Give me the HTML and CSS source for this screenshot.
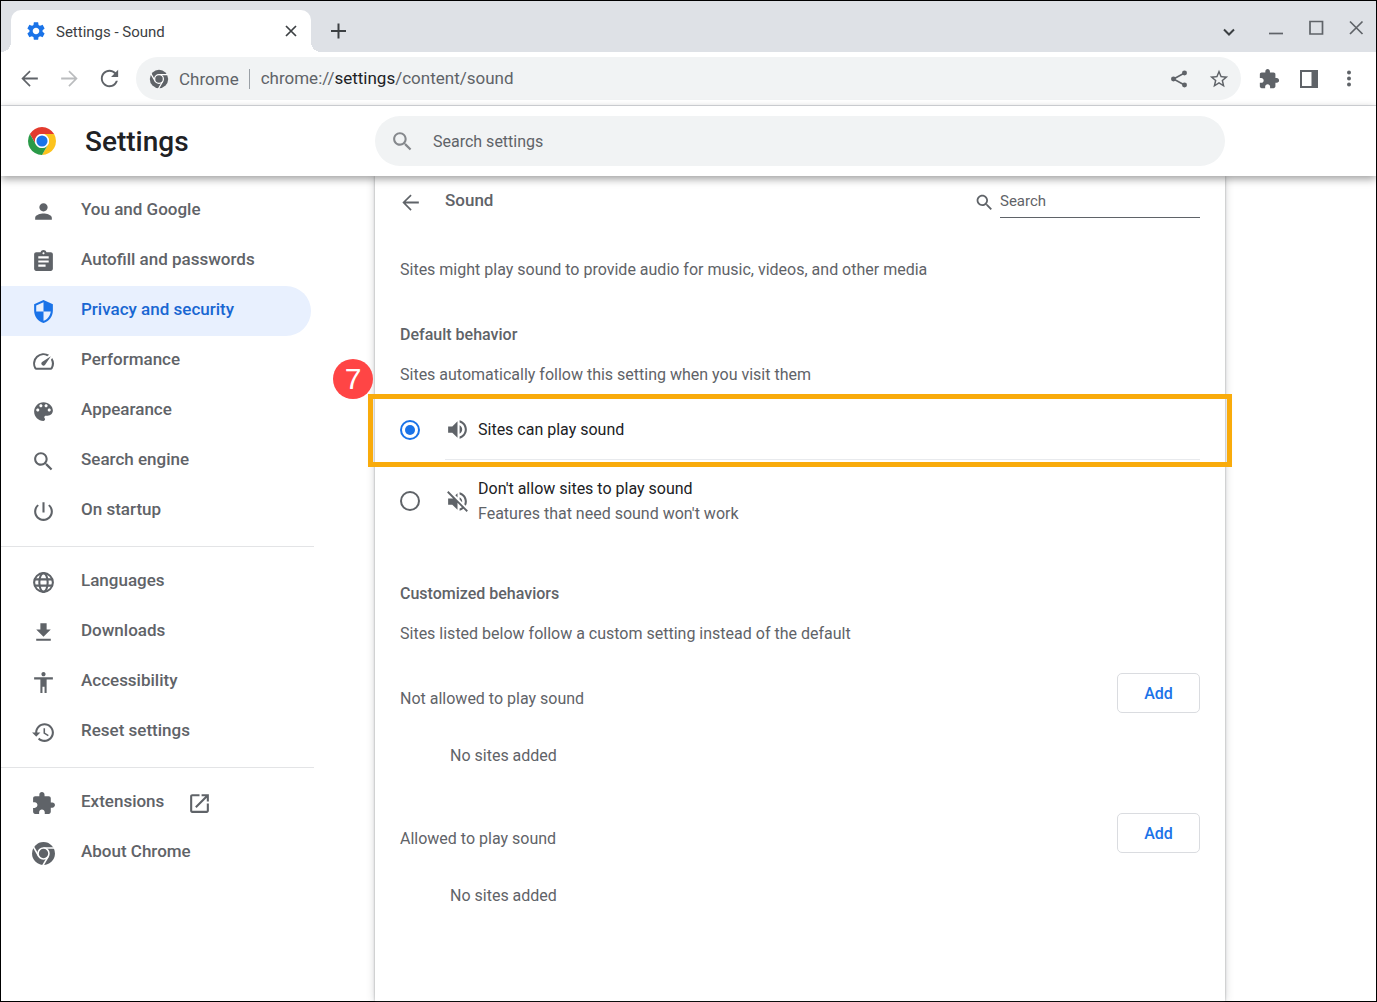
FILE: index.html
```html
<!DOCTYPE html>
<html lang="en">
<head>
<meta charset="utf-8">
<title>Settings - Sound</title>
<link rel="stylesheet" href="styles.css">
</head>
<body>
<svg class="sprite" aria-hidden="true">
  <symbol id="search" viewBox="0 0 24 24"><path d="M15.5 14h-.79l-.28-.27C15.41 12.59 16 11.11 16 9.5 16 5.91 13.09 3 9.5 3S3 5.91 3 9.5 5.91 16 9.5 16c1.61 0 3.09-.59 4.23-1.57l.27.28v.79l5 4.99L20.49 19l-4.99-5zm-6 0C7.01 14 5 11.99 5 9.5S7.01 5 9.5 5 14 7.01 14 9.5 11.99 14 9.5 14z"/></symbol>
  <symbol id="arrow-back" viewBox="0 0 24 24"><path d="M20 11.1H7.4l5.7-5.7L12 4.200 4.200 12l7.800 7.800 1.100-1.200-5.700-5.700H20z"/></symbol>
  <symbol id="arrow-forward" viewBox="0 0 24 24"><path d="M4 11.100h12.600l-5.700-5.700L12 4.200l7.800 7.800-7.800 7.800-1.100-1.200 5.700-5.700H4z"/></symbol>
  <symbol id="extension" viewBox="0 0 24 24"><path d="M20.5 11H19V7c0-1.1-.9-2-2-2h-4V3.5C13 2.12 11.88 1 10.5 1S8 2.12 8 3.5V5H4c-1.1 0-1.99.9-1.99 2v3.8H3.5c1.49 0 2.7 1.21 2.7 2.7s-1.21 2.7-2.7 2.7H2V20c0 1.1.9 2 2 2h3.8v-1.5c0-1.49 1.21-2.7 2.7-2.7 1.49 0 2.7 1.21 2.7 2.7V22H17c1.1 0 2-.9 2-2v-4h1.5c1.38 0 2.5-1.12 2.5-2.5S21.88 11 20.5 11z"/></symbol>
  <symbol id="chrome-mono" viewBox="0 0 48 48">
    <circle cx="24" cy="24" r="22"/>
    <path class="cut" d="M24 13.5H45M33.1 29.3 22.6 47.4M14.9 29.3 4.4 11"/>
    <circle class="cut" cx="24" cy="24" r="10.5"/>
  </symbol>
</svg>

<div class="window">
  <header class="tab-strip">
    <div class="tab">
      <svg class="icon favicon" viewBox="0 0 24 24"><path d="M19.14 12.94c.04-.3.06-.61.06-.94 0-.32-.02-.64-.07-.94l2.03-1.58c.18-.14.23-.41.12-.61l-1.92-3.32c-.12-.22-.37-.29-.59-.22l-2.39.96c-.5-.38-1.03-.7-1.62-.94l-.36-2.54c-.04-.24-.24-.41-.48-.41h-3.84c-.24 0-.43.17-.47.41l-.36 2.54c-.59.24-1.13.57-1.62.94l-2.39-.96c-.22-.08-.47 0-.59.22L2.74 8.87c-.12.21-.08.47.12.61l2.03 1.58c-.05.3-.09.63-.09.94s.02.64.07.94l-2.03 1.58c-.18.14-.23.41-.12.61l1.92 3.32c.12.22.37.29.59.22l2.39-.96c.5.38 1.03.7 1.62.94l.36 2.54c.05.24.24.41.48.41h3.84c.24 0 .44-.17.47-.41l.36-2.54c.59-.24 1.13-.56 1.62-.94l2.39.96c.22.08.47 0 .59-.22l1.92-3.32c.12-.22.07-.47-.12-.61l-2.01-1.58zM12 15.6c-1.98 0-3.6-1.62-3.6-3.6s1.62-3.6 3.6-3.6 3.6 1.62 3.6 3.6-1.62 3.6-3.6 3.6z"/></svg>
      <span class="tab-title">Settings - Sound</span>
      <button class="tab-close" aria-label="Close tab"><svg width="12" height="12" viewBox="0 0 12 12"><path class="line thin" d="M1 1l10 10M11 1l-10 10"/></svg></button>
    </div>
    <button class="new-tab" aria-label="New tab"><svg width="16" height="16" viewBox="0 0 16 16"><path class="line" d="M7.500 .500v15M0 8h15"/></svg></button>
    <div class="window-controls">
      <button class="win-btn tab-search" aria-label="Search tabs"><svg width="14" height="14" viewBox="0 0 14 14"><path class="line" d="M2 4.500l5 5 5-5"/></svg></button>
      <button class="win-btn" aria-label="Minimize"><svg width="16" height="16" viewBox="0 0 16 16"><path class="line thin" d="M1 14.500h14"/></svg></button>
      <button class="win-btn" aria-label="Maximize"><svg width="16" height="16" viewBox="0 0 16 16"><path class="line thin" d="M2 2.500h12.500v12.500H2z"/></svg></button>
      <button class="win-btn" aria-label="Close"><svg width="16" height="16" viewBox="0 0 16 16"><path class="line thin" d="M2 2.500l12.500 12.500M14.500 2.500l-12.500 12.500"/></svg></button>
    </div>
  </header>

  <div class="toolbar">
    <button class="tool" aria-label="Back"><svg class="icon"><use href="#arrow-back"/></svg></button>
    <button class="tool forward" aria-label="Forward" disabled><svg class="icon"><use href="#arrow-forward"/></svg></button>
    <button class="tool" aria-label="Reload"><svg class="icon" viewBox="0 0 24 24"><path d="M17.900 6.100C16.300 4.500 14.300 3.700 12 3.700c-4.600 0-8.300 3.700-8.300 8.300s3.700 8.300 8.300 8.300c3.900 0 7.100-2.600 8-6.200h-1.900c-.9 2.600-3.200 4.400-6.100 4.400-3.600 0-6.500-2.900-6.500-6.500s2.900-6.500 6.500-6.500c1.800 0 3.400.7 4.600 1.900L13.500 10.500H20.300V3.700z"/></svg></button>
    <div class="omnibox">
      <svg class="icon site-icon"><use href="#chrome-mono"/></svg>
      <span class="site-name">Chrome</span>
      <span class="url">chrome://<b>settings</b>/content/sound</span>
      <button class="tool" aria-label="Share"><svg class="icon small" viewBox="0 0 24 24"><path class="line thin" d="M18 5.500 6 12l12 6.500"/><circle cx="18" cy="5.500" r="2.700"/><circle cx="6" cy="12" r="2.700"/><circle cx="18" cy="18.500" r="2.700"/></svg></button>
      <button class="tool" aria-label="Bookmark this tab"><svg class="icon small" viewBox="0 0 24 24"><path d="M22 9.240l-7.190-.62L12 2 9.190 8.630 2 9.240l5.460 4.730L5.820 21 12 17.270 18.180 21l-1.630-7.030L22 9.240zM12 15.400l-3.760 2.270 1-4.280-3.320-2.880 4.380-.38L12 6.100l1.710 4.040 4.380.38-3.320 2.880 1 4.280L12 15.400z"/></svg></button>
    </div>
    <button class="tool" aria-label="Extensions"><svg class="icon small"><use href="#extension"/></svg></button>
    <button class="tool" aria-label="Side panel"><svg width="18" height="18" viewBox="0 0 18 18"><path d="M0 0h18v18H0zM2 2v14h9.500V2z" fill-rule="evenodd"/></svg></button>
    <button class="tool" aria-label="Menu"><svg width="18" height="18" viewBox="0 0 18 18"><circle cx="9" cy="2.500" r="2"/><circle cx="9" cy="8.500" r="2"/><circle cx="9" cy="14.500" r="2"/></svg></button>
  </div>

  <div class="app-bar">
    <div class="brand">
      <svg class="logo" viewBox="2 2 44 44">
        <path fill="#e33b2e" d="M4.950 13A22 22 0 0 1 43.050 13H24A11 11 0 0 0 14.470 29.500z"/>
        <path fill="#fcc31e" d="M43.050 13A22 22 0 0 1 24 46L33.530 29.500A11 11 0 0 0 24 13z"/>
        <path fill="#2a9a48" d="M24 46A22 22 0 0 1 4.950 13L14.470 29.500A11 11 0 0 0 33.530 29.500z"/>
        <circle cx="24" cy="24" r="11" fill="#fff"/><circle cx="24" cy="24" r="8.700" fill="#1a73e8"/>
      </svg>
      <h1>Settings</h1>
    </div>
    <label class="main-search">
      <svg class="icon"><use href="#search"/></svg>
      <input type="text" placeholder="Search settings" aria-label="Search settings">
    </label>
  </div>

  <div class="content">
    <nav class="menu">
      <a href="#people"><svg class="icon" viewBox="0 0 24 24"><path d="M12 12c2.210 0 4-1.790 4-4s-1.790-4-4-4-4 1.790-4 4 1.790 4 4 4zm0 2c-2.670 0-8 1.340-8 4v2h16v-2c0-2.660-5.330-4-8-4z"/></svg><span>You and Google</span></a>
      <a href="#autofill"><svg class="icon" viewBox="0 0 24 24"><path d="M19 3h-4.180C14.400 1.840 13.300 1 12 1c-1.300 0-2.400.84-2.820 2H5c-1.100 0-2 .9-2 2v14c0 1.100.9 2 2 2h14c1.100 0 2-.9 2-2V5c0-1.100-.9-2-2-2zm-7 0c.55 0 1 .45 1 1s-.45 1-1 1-1-.45-1-1 .45-1 1-1zm2 14H7v-2h7v2zm3-4H7v-2h10v2zm0-4H7V7h10v2z"/></svg><span>Autofill and passwords</span></a>
      <a href="#privacy" class="selected" aria-current="page"><svg class="icon" viewBox="0 0 24 24"><path d="M12 1L3 5v6c0 5.550 3.840 10.740 9 12 5.160-1.260 9-6.450 9-12V5l-9-4zm0 10.990h7c-.53 4.120-3.280 7.790-7 8.940V12H5V6.300l7-3.110v8.800z"/></svg><span>Privacy and security</span></a>
      <a href="#performance"><svg class="icon" viewBox="0 0 24 24"><path d="M20.380 8.570l-1.230 1.850a8 8 0 0 1-.22 7.580H5.070A8 8 0 0 1 15.580 6.850l1.850-1.230A10 10 0 0 0 3.350 19a2 2 0 0 0 1.720 1h13.850a2 2 0 0 0 1.740-1 10 10 0 0 0-.27-10.440zm-9.790 6.840a2 2 0 0 0 2.830 0l5.660-8.490-8.490 5.660a2 2 0 0 0 0 2.830z"/></svg><span>Performance</span></a>
      <a href="#appearance"><svg class="icon" viewBox="0 0 24 24"><path d="M12 3c-4.970 0-9 4.030-9 9s4.030 9 9 9c.83 0 1.500-.67 1.500-1.500 0-.39-.15-.74-.39-1.010-.23-.26-.38-.61-.38-.99 0-.83.67-1.500 1.500-1.500H16c2.760 0 5-2.240 5-5 0-4.420-4.030-8-9-8zm-5.500 9c-.83 0-1.500-.67-1.500-1.500S5.670 9 6.500 9 8 9.670 8 10.500 7.330 12 6.500 12zm3-4C8.670 8 8 7.330 8 6.500S8.670 5 9.500 5s1.500.67 1.500 1.500S10.330 8 9.500 8zm5 0c-.83 0-1.500-.67-1.500-1.500S13.670 5 14.500 5s1.500.67 1.500 1.500S15.330 8 14.500 8zm3 4c-.83 0-1.500-.67-1.500-1.500S16.670 9 17.500 9s1.500.67 1.500 1.500-.67 1.500-1.500 1.500z"/></svg><span>Appearance</span></a>
      <a href="#search-engine"><svg class="icon"><use href="#search"/></svg><span>Search engine</span></a>
      <a href="#startup"><svg class="icon" viewBox="0 0 24 24"><path d="M13 3h-2v10h2V3zm4.830 2.170l-1.420 1.420C17.990 7.860 19 9.810 19 12c0 3.870-3.130 7-7 7s-7-3.130-7-7c0-2.190 1.010-4.140 2.580-5.420L6.170 5.170C4.230 6.820 3 9.260 3 12c0 4.970 4.030 9 9 9s9-4.030 9-9c0-2.740-1.230-5.180-3.170-6.830z"/></svg><span>On startup</span></a>
      <hr>
      <a href="#languages"><svg class="icon" viewBox="0 0 24 24"><g class="line"><circle cx="12" cy="12" r="9"/><ellipse cx="12" cy="12" rx="4" ry="9"/><path d="M3.600 9h16.800M3.600 15h16.800"/></g></svg><span>Languages</span></a>
      <a href="#downloads"><svg class="icon" viewBox="0 0 24 24"><path d="M19 9h-4V3H9v6H5l7 7 7-7zM5 18v2h14v-2H5z"/></svg><span>Downloads</span></a>
      <a href="#accessibility"><svg class="icon" viewBox="0 0 24 24"><path d="M12 2c1.100 0 2 .9 2 2s-.9 2-2 2-2-.9-2-2 .9-2 2-2zm9 7h-6v13h-2v-6h-2v6H9V9H3V7h18v2z"/></svg><span>Accessibility</span></a>
      <a href="#reset"><svg class="icon" viewBox="0 0 24 24"><path d="M13 3c-4.970 0-9 4.030-9 9H1l3.890 3.890.07.14L9 12H6c0-3.870 3.130-7 7-7s7 3.130 7 7-3.130 7-7 7c-1.930 0-3.680-.79-4.940-2.060l-1.420 1.420C8.270 19.990 10.510 21 13 21c4.970 0 9-4.030 9-9s-4.030-9-9-9zm-1 5v5l4.280 2.540.72-1.210-3.500-2.080V8H12z"/></svg><span>Reset settings</span></a>
      <hr>
      <a href="#extensions"><svg class="icon"><use href="#extension"/></svg><span>Extensions</span><svg class="icon external" viewBox="0 0 24 24"><path d="M19 19H5V5h7V3H5c-1.110 0-2 .9-2 2v14c0 1.100.89 2 2 2h14c1.100 0 2-.9 2-2v-7h-2v7zM14 3v2h3.590l-9.830 9.830 1.410 1.410L19 6.410V10h2V3h-7z"/></svg></a>
      <a href="#about"><svg class="icon"><use href="#chrome-mono"/></svg><span>About Chrome</span></a>
    </nav>

    <main class="card">
      <div class="card-header">
        <button class="back" aria-label="Back"><svg class="icon"><use href="#arrow-back"/></svg></button>
        <h2 class="page-title">Sound</h2>
        <label class="card-search">
          <svg class="icon"><use href="#search"/></svg>
          <input type="text" placeholder="Search" aria-label="Search">
        </label>
      </div>

      <p class="intro">Sites might play sound to provide audio for music, videos, and other media</p>

      <section>
        <h3>Default behavior</h3>
        <p class="hint">Sites automatically follow this setting when you visit them</p>
        <div class="options">
          <div class="option highlighted">
            <input type="radio" name="sound" id="sound-allow" checked>
            <label for="sound-allow">
              <svg class="icon" viewBox="0 0 24 24"><path d="M3 9v6h4l5 5V4L7 9H3zm13.500 3c0-1.770-1.020-3.290-2.500-4.030v8.050c1.480-.73 2.500-2.250 2.500-4.020zM14 3.230v2.060c2.890.86 5 3.540 5 6.710s-2.110 5.850-5 6.710v2.060c4.010-.91 7-4.490 7-8.770s-2.990-7.860-7-8.770z"/></svg>
              <span>Sites can play sound</span>
            </label>
            <div class="callout"><span class="step">7</span></div>
          </div>
          <div class="option tall">
            <input type="radio" name="sound" id="sound-block">
            <label for="sound-block">
              <svg class="icon" viewBox="0 0 24 24"><path d="M16.500 12c0-1.770-1.020-3.290-2.500-4.030v2.210l2.450 2.450c.03-.2.05-.41.05-.63zm2.500 0c0 .94-.2 1.820-.54 2.640l1.510 1.510C20.630 14.910 21 13.500 21 12c0-4.280-2.990-7.860-7-8.770v2.060c2.890.86 5 3.540 5 6.710zM3.270 2L2 3.270 7.730 9H3v6h4l5 5v-6.730l4.250 4.250c-.67.52-1.420.93-2.250 1.180v2.060c1.380-.31 2.630-.95 3.690-1.810L20.730 22 22 20.730l-10-10L3.270 2zM12 4L9.910 6.090 12 8.180V4z"/></svg>
              <span>Don't allow sites to play sound<small>Features that need sound won't work</small></span>
            </label>
          </div>
        </div>
      </section>

      <section>
        <h3>Customized behaviors</h3>
        <p class="hint">Sites listed below follow a custom setting instead of the default</p>
        <div class="site-list">
          <div class="site-list-header"><h4>Not allowed to play sound</h4><button class="add">Add</button></div>
          <p class="empty">No sites added</p>
        </div>
        <div class="site-list">
          <div class="site-list-header"><h4>Allowed to play sound</h4><button class="add">Add</button></div>
          <p class="empty">No sites added</p>
        </div>
      </section>
    </main>
  </div>
</div>
</body>
</html>
```
FILE: styles.css
```css
* { box-sizing: border-box; }

body {
  margin: 0;
  font: 400 16px/25px Roboto, "Liberation Sans", sans-serif;
  color: #5f6368;
  background: #fff;
}

h1, h2, h3, h4, p { margin: 0; font-size: inherit; }
h2, h3 { font-weight: 500; }
h4 { font-weight: 400; }

button {
  display: flex;
  align-items: center;
  justify-content: center;
  padding: 0;
  border: 0;
  background: none;
  font: inherit;
  color: inherit;
}

input { font: inherit; color: inherit; }
input::placeholder { color: #5f6368; opacity: 1; }

svg { flex: none; fill: currentColor; }
.sprite { position: absolute; width: 0; height: 0; }
.icon { width: 25px; height: 25px; }
.icon.small { width: 22px; height: 22px; }
.line { fill: none; stroke: currentColor; stroke-width: 2; }
.line.thin { stroke-width: 1.7; }
.cut { stroke: #fff; stroke-width: 3; }

.window {
  display: flex;
  flex-direction: column;
  min-height: 100vh;
  border: 1px solid #000;
}

/* Tab strip */
.tab-strip {
  display: flex;
  align-items: flex-end;
  height: 51px;
  padding-left: 10px;
  background: #dee1e6;
  color: #3c4043;
}

.tab {
  position: relative;
  display: flex;
  align-items: center;
  width: 300px;
  height: 42px;
  padding: 0 10px 0 14px;
  border-radius: 10px 10px 0 0;
  background: #fff;
}

.tab::before, .tab::after {
  content: "";
  position: absolute;
  bottom: 0;
  width: 10px;
  height: 10px;
}
.tab::before { right: 100%; background: radial-gradient(circle at 0 0, transparent 10px, #fff 10px); }
.tab::after { left: 100%; background: radial-gradient(circle at 100% 0, transparent 10px, #fff 10px); }

.favicon { width: 22px; height: 22px; color: #1a73e8; }
.tab-title { flex: 1; padding: 2px 0 0 9px; font-size: 15px; }
.tab-close { width: 20px; height: 20px; }
.new-tab { width: 40px; height: 42px; margin-left: 8px; }

.window-controls { display: flex; margin-left: auto; height: 100%; color: #5f6368; }
.win-btn { width: 40px; height: 51px; }
.tab-search { margin-right: 7px; padding-top: 10px; color: #3c4043; }

/* Toolbar */
.toolbar {
  display: flex;
  align-items: center;
  height: 54px;
  padding: 0 7px 0 8px;
  border-bottom: 1px solid #dadce0;
}

.tool { width: 40px; height: 40px; }
.forward { color: #babcbe; }

.omnibox {
  display: flex;
  flex: 1;
  align-items: center;
  height: 43px;
  margin: 0 8px 0 7px;
  padding: 0 2px 0 13px;
  border-radius: 22px;
  background: #f1f3f4;
  font-size: 17px;
}
.site-icon { width: 20px; height: 20px; }
.site-name { margin-left: 10px; padding-right: 10px; border-right: 1px solid #9aa0a6; line-height: 20px; }
.url { flex: 1; padding-left: 11px; }
.url b { font-weight: 400; color: #202124; }

/* Settings header */
.app-bar {
  position: relative;
  z-index: 1;
  display: flex;
  align-items: center;
  height: 70px;
  background: #fff;
  box-shadow: 0 3px 8px rgba(0, 0, 0, .38);
}
.brand { display: flex; flex: none; align-items: center; width: 374px; padding-left: 27px; }
.logo { width: 28px; height: 28px; }
h1 { margin-left: 29px; font-size: 28px; font-weight: 500; color: #202124; }

.main-search {
  display: flex;
  flex: 0 1 850px;
  align-items: center;
  height: 50px;
  padding: 0 20px 0 15px;
  border-radius: 25px;
  background: #f1f3f4;
}
.main-search .icon { color: #85888c; }
.main-search input { flex: 1; min-width: 0; margin-left: 16px; padding: 0 2px; border: 0; background: none; }

/* Body */
.content { display: flex; flex: 1; }

.menu { flex: none; width: 313px; margin-right: 61px; padding: 10px 0; }
.menu a {
  display: flex;
  align-items: center;
  height: 50px;
  margin-right: 3px;
  padding-left: 30px;
  border-radius: 0 25px 25px 0;
  font-size: 17px;
  font-weight: 500;
  color: inherit;
  text-decoration: none;
}
.menu span { padding: 0 0 4px 25px; }
.menu .selected { background: #e8f0fe; color: #1967d2; }
.menu .selected .icon { color: #1a73e8; }
.menu .external { margin-left: 23px; }
.menu hr { height: 1px; margin: 10px 0; border: 0; background: #e3e4e6; }

.card {
  flex: 0 1 850px;
  padding: 1px 25px 40px;
  box-shadow: 0 0 2px rgba(60, 64, 67, .4), 0 0 8px rgba(60, 64, 67, .25);
}

.card-header { display: flex; align-items: center; height: 50px; }
.back { width: 25px; height: 25px; margin-left: -2px; }
.page-title { padding: 0 0 4px 22px; font-size: 17px; }
.card-search { display: flex; align-items: center; margin-left: auto; font-size: 15px; }
.card-search .icon { width: 21px; height: 21px; margin-right: 5px; }
.card-search input {
  width: 200px;
  height: 32px;
  padding: 0 0 2px;
  border: 0;
  border-bottom: 1px solid #5f6368;
  border-radius: 0;
  background: none;
}

.intro { margin-top: 30px; }
section h3 { margin-top: 40px; }
.hint { margin-top: 15px; }

.options { margin-top: 13px; color: #202124; }
.option { position: relative; display: flex; align-items: center; height: 60px; }
.option.tall { height: 80px; margin-top: 1px; }
.option input {
  appearance: none;
  width: 20px;
  height: 20px;
  margin: 0 25px 0 0;
  padding: 3px;
  border: 2px solid #5f6368;
  border-radius: 50%;
}
.option input:checked { border-color: #1a73e8; background: #1a73e8 content-box; }
.option label { display: flex; flex: 1; align-items: center; height: 100%; }
.highlighted label { border-bottom: 1px solid #e8eaed; }
.option label .icon { margin-right: 8px; color: #5f6368; }
.option small { display: block; font-size: 16px; color: #5f6368; }

.callout {
  position: absolute;
  inset: -6px -32px -7px;
  border: 5px solid #f9ab0b;
  pointer-events: none;
}
.step {
  position: absolute;
  top: -40px;
  left: -40px;
  width: 40px;
  border-radius: 50%;
  background: #ff4545;
  color: #fff;
  font: 30px/40px "Liberation Sans", sans-serif;
  text-align: center;
}

.site-list { margin-top: 27px; }
.site-list + .site-list { margin-top: 45px; }
.site-list-header { display: flex; align-items: center; justify-content: space-between; }
.site-list h4 { padding-top: 10px; }
.add {
  width: 83px;
  height: 40px;
  border: 1px solid #dadce0;
  border-radius: 5px;
  color: #1a73e8;
  font-weight: 500;
}
.empty { margin-top: 30px; padding-left: 50px; }
```
